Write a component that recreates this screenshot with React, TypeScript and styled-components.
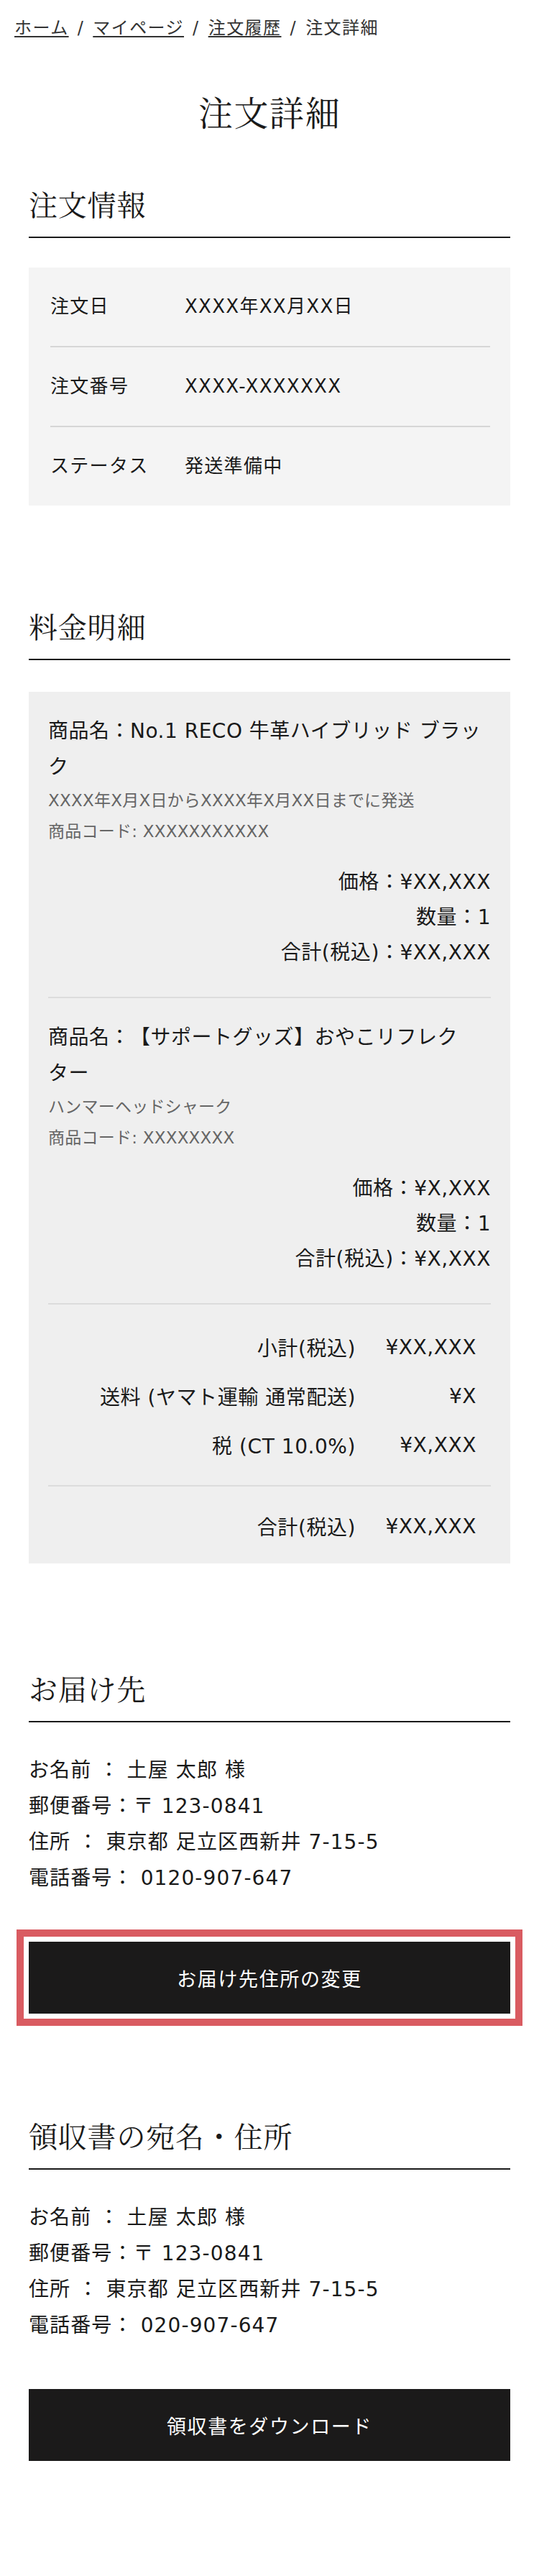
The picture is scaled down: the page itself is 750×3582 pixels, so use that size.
import React from "react";
import styled, { createGlobalStyle, css } from "styled-components";

const SERIF = `"Noto Serif CJK JP", "Noto Serif JP", "IPAMincho", "Liberation Serif", serif`;
const SANS = `"DejaVu Sans", "Noto Sans CJK JP", "Noto Sans", sans-serif`;

const GlobalStyle = createGlobalStyle`
  html, body { margin: 0; padding: 0; background: #ffffff; }
  body {
    font-family: ${SANS};
    color: #1a1a1a;
    -webkit-font-smoothing: antialiased;
  }
  * { box-sizing: border-box; }
`;

const Page = styled.main`
  width: 750px;
  padding: 0 40px 162px;
  line-break: strict;
  text-spacing-trim: space-all;
`;

const Breadcrumb = styled.nav`
  margin: 0 -20px;
  padding-top: 21px;
  font-size: 24px;
  line-height: 36px;
  letter-spacing: 0.06em;
  color: #333;
  white-space: nowrap;
`;

const Crumb = styled.a`
  color: #333;
  text-decoration: underline;
  text-decoration-thickness: 1.5px;
  text-underline-offset: 3px;
`;

const Sep = styled.span`
  padding: 0 3px;
`;

const Current = styled.span`
  color: #333;
`;

const Title = styled.h1`
  margin: 62px 0 0;
  text-align: center;
  font-family: ${SERIF};
  font-weight: 400;
  font-size: 48px;
  line-height: 72px;
  letter-spacing: 0.03em;
`;

const Section = styled.section<{ $gap: number }>`
  margin-top: ${(p) => p.$gap}px;
`;

const SectionTitle = styled.h2`
  margin: 0;
  padding-bottom: 16px;
  border-bottom: 2px solid #1a1a1a;
  font-family: ${SERIF};
  font-weight: 400;
  font-size: 40px;
  line-height: 60px;
  letter-spacing: 0.02em;
`;

const InfoBox = styled.dl`
  margin: 41px 0 0;
  padding: 0 28px 0 30px;
  background: #f4f4f4;
`;

const InfoRow = styled.div`
  display: grid;
  grid-template-columns: 187px 1fr;
  padding: 35px 0;
  font-size: 26px;
  line-height: 39px;
  letter-spacing: 0.05em;
  & + & {
    border-top: 2px solid #d6d6d6;
  }
`;

const InfoLabel = styled.dt`
  margin: 0;
`;

const InfoValue = styled.dd`
  margin: 0;
`;

const PriceBox = styled.div`
  margin-top: 44px;
  padding: 0 27px;
  background: #efefef;
`;

const Item = styled.div`
  padding: 30px 0 37px;
  border-bottom: 2px solid #dcdcdc;
`;

const ItemName = styled.p`
  margin: 0;
  font-size: 28px;
  line-height: 50px;
  letter-spacing: 0.5px;
`;

const ItemMeta = styled.p`
  margin: 0;
  font-size: 23px;
  line-height: 43px;
  letter-spacing: 0.01em;
  color: #666;
`;

const PriceLines = styled.div`
  margin-top: 24px;
  text-align: right;
  font-size: 28px;
  line-height: 49px;
  letter-spacing: 0.02em;
`;

const Summary = styled.div<{ $final?: boolean }>`
  padding: ${(p) => (p.$final ? "21px 0 18px" : "25px 0 22px")};
  ${(p) =>
    !p.$final &&
    css`
      border-bottom: 2px solid #dcdcdc;
    `}
`;

const SumRow = styled.div`
  display: grid;
  grid-template-columns: 1fr 132px;
  column-gap: 36px;
  padding-right: 20px;
  height: 68px;
  align-items: center;
  font-size: 28px;
  letter-spacing: 0.02em;
`;

const SumCell = styled.span`
  text-align: right;
  white-space: nowrap;
`;

const Address = styled.div`
  margin-top: 42px;
  font-size: 28px;
  line-height: 50px;
  letter-spacing: 0.04em;
`;

const AddressLine = styled.p`
  margin: 0;
  white-space: nowrap;
`;

const BlackButton = styled.button<{ $highlight?: boolean }>`
  display: block;
  width: 100%;
  height: 100px;
  margin-top: 63px;
  border: 0;
  background: #1b1a1a;
  color: #ffffff;
  font-family: ${SANS};
  font-size: 27px;
  letter-spacing: 0.06em;
  cursor: pointer;
  ${(p) =>
    p.$highlight &&
    css`
      outline: 10px solid #d95b61;
      outline-offset: 7px;
    `}
`;

type Product = {
  name: string;
  meta: string[];
  price: string;
  qty: string;
  total: string;
};

const products: Product[] = [
  {
    name: "商品名：No.1 RECO 牛革ハイブリッド ブラック",
    meta: ["XXXX年X月X日からXXXX年X月XX日までに発送", "商品コード: XXXXXXXXXXX"],
    price: "¥XX,XXX",
    qty: "1",
    total: "¥XX,XXX",
  },
  {
    name: "商品名：【サポートグッズ】おやこリフレクター",
    meta: ["ハンマーヘッドシャーク", "商品コード: XXXXXXXX"],
    price: "¥X,XXX",
    qty: "1",
    total: "¥X,XXX",
  },
];

const info = [
  ["注文日", "XXXX年XX月XX日"],
  ["注文番号", "XXXX-XXXXXXX"],
  ["ステータス", "発送準備中"],
];

const sums = [
  ["小計(税込)", "¥XX,XXX"],
  ["送料 (ヤマト運輸 通常配送)", "¥X"],
  ["税 (CT 10.0%)", "¥X,XXX"],
];

const AddressLines = ({ phone }: { phone: string }) => (
  <Address>
    <AddressLine>お名前 ： 土屋 太郎 様</AddressLine>
    <AddressLine>郵便番号：〒 123-0841</AddressLine>
    <AddressLine>住所 ： 東京都 足立区西新井 7-15-5</AddressLine>
    <AddressLine>電話番号： {phone}</AddressLine>
  </Address>
);

export default function App() {
  return (
    <>
      <GlobalStyle />
      <Page lang="ja">
        <Breadcrumb>
          <Crumb href="#">ホーム</Crumb>
          <Sep> / </Sep>
          <Crumb href="#">マイページ</Crumb>
          <Sep> / </Sep>
          <Crumb href="#">注文履歴</Crumb>
          <Sep> / </Sep>
          <Current>注文詳細</Current>
        </Breadcrumb>

        <Title>注文詳細</Title>

        <Section $gap={62}>
          <SectionTitle>注文情報</SectionTitle>
          <InfoBox>
            {info.map(([k, v]) => (
              <InfoRow key={k}>
                <InfoLabel>{k}</InfoLabel>
                <InfoValue>{v}</InfoValue>
              </InfoRow>
            ))}
          </InfoBox>
        </Section>

        <Section $gap={137}>
          <SectionTitle>料金明細</SectionTitle>
          <PriceBox>
            {products.map((p) => (
              <Item key={p.name}>
                <ItemName>{p.name}</ItemName>
                {p.meta.map((m) => (
                  <ItemMeta key={m}>{m}</ItemMeta>
                ))}
                <PriceLines>
                  <div>価格：{p.price}</div>
                  <div>数量：{p.qty}</div>
                  <div>合計(税込)：{p.total}</div>
                </PriceLines>
              </Item>
            ))}
            <Summary>
              {sums.map(([k, v]) => (
                <SumRow key={k}>
                  <SumCell>{k}</SumCell>
                  <SumCell>{v}</SumCell>
                </SumRow>
              ))}
            </Summary>
            <Summary $final>
              <SumRow>
                <SumCell>合計(税込)</SumCell>
                <SumCell>¥XX,XXX</SumCell>
              </SumRow>
            </Summary>
          </PriceBox>
        </Section>

        <Section $gap={143}>
          <SectionTitle>お届け先</SectionTitle>
          <AddressLines phone="0120-907-647" />
          <BlackButton $highlight>お届け先住所の変更</BlackButton>
        </Section>

        <Section $gap={139}>
          <SectionTitle>領収書の宛名・住所</SectionTitle>
          <AddressLines phone="020-907-647" />
          <BlackButton>領収書をダウンロード</BlackButton>
        </Section>
      </Page>
    </>
  );
}
